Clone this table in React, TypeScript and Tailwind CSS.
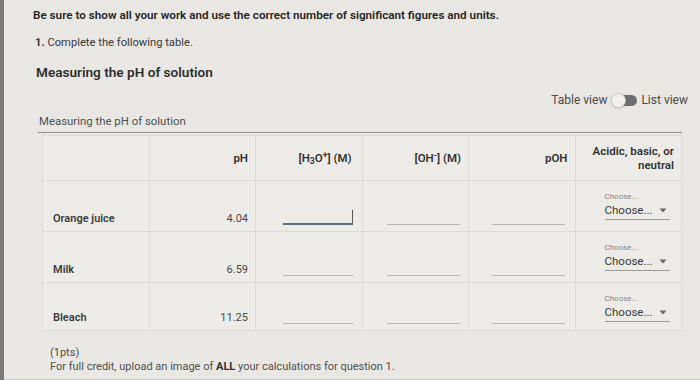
import type { ReactNode } from 'react';

interface Solution {
  name: string;
  ph: string;
  height: string;
}

const solutions: Solution[] = [
  { name: 'Orange juice', ph: '4.04', height: 'h-[51px]' },
  { name: 'Milk', ph: '6.59', height: 'h-[51px]' },
  { name: 'Bleach', ph: '11.25', height: 'h-[48px]' },
];

const cell = 'border-[1.5px] border-[#dddbd6] bg-[#ecebe7] p-0';

const HeaderCell = ({ children }: { children: ReactNode }) => (
  <th className={`${cell} pr-[7px] text-right align-middle text-[11.5px] font-semibold leading-[14px] text-[#333]`}>
    {children}
  </th>
);

// text field with only a bottom line; `focused` shows the caret and the darker line
const LineInput = ({ pl, pr, focused }: { pl: string; pr: string; focused?: boolean }) => (
  <td className={`${cell} ${pl} ${pr} align-bottom pb-[6px]`}>
    <div className="relative h-[15px]">
      {focused && <span className="absolute right-0 top-0 h-[14px] w-px bg-[#555]" />}
      <div className={focused ? 'absolute bottom-0 left-0 right-0 h-[2px] bg-[#5b6f7c]' : 'absolute bottom-0 left-0 right-0 h-px bg-[#b9b7b2]'} />
    </div>
  </td>
);

const ChooseSelect = () => (
  <td className={`${cell} pl-[29px] pr-[11px] align-top pt-[11px]`}>
    <div className="text-[8px] leading-[10px] text-[#858585]">Choose...</div>
    <div className="mt-[1px] flex items-center justify-between border-b border-[#9c9a96] pb-[2px]">
      <span className="text-[11.5px] leading-[14px] text-[#3a3a3a]">Choose...</span>
      <svg width="8" height="5" viewBox="0 0 8 5" className="mr-[3px]">
        <path d="M0.5 0.5 L4 4.5 L7.5 0.5 Z" fill="#666" />
      </svg>
    </div>
  </td>
);

export default function App() {
  return (
    <div className="flex h-[380px] w-[700px] overflow-hidden bg-[#e9e7e3] font-['Roboto',sans-serif] text-[#2b2b2b]">
      <div className="w-[4px] shrink-0 bg-[#7b7b7b]" />
      <div className="flex-1 border-b border-[#cfcdc8]">
        <p className="ml-[29px] mt-[6px] text-[11.7px] font-semibold leading-[18px] text-[#262626]">
          Be sure to show all your work and use the correct number of significant figures and units.
        </p>
        <p className="ml-[31px] mt-[10px] text-[11.2px] leading-[18px] text-[#3a3a3a]">
          <span className="font-bold">1.</span> Complete the following table.
        </p>
        <h2 className="ml-[32px] mt-[10px] text-[13.6px] font-semibold leading-[20px] text-[#2e2e2e]">
          Measuring the pH of solution
        </h2>

        <div className="mr-[12px] mt-[10px] flex items-center justify-end gap-[4px] text-[12px] leading-[16px] text-[#4a4a4a]">
          <span>Table view</span>
          <span className="relative h-[14px] w-[26px]">
            <span className="absolute right-0 top-[2px] h-[11px] w-[19px] rounded-full bg-[#6e6e6e]" />
            <span className="absolute left-0 top-0 h-[15px] w-[15px] rounded-full border border-[#c9c7c3] bg-[#f1f0ec] shadow-sm" />
          </span>
          <span>List view</span>
        </div>

        <div className="ml-[34px] mt-[5px] w-[644px] border-b-[1.5px] border-[#8f8d89] pb-[3px] pl-[1px] text-[11.4px] leading-[16px] text-[#505050]">
          Measuring the pH of solution
        </div>

        <table className="ml-[38px] mt-[2px] w-[640px] table-fixed border-collapse">
          <thead>
            <tr className="h-[45px]">
              <HeaderCell>{''}</HeaderCell>
              <HeaderCell>pH</HeaderCell>
              <HeaderCell>
                <span className="pr-[3px]">
                  [H<sub>3</sub>O<sup>+</sup>] (M)
                </span>
              </HeaderCell>
              <HeaderCell>
                [OH<sup>-</sup>] (M)
              </HeaderCell>
              <HeaderCell>pOH</HeaderCell>
              <HeaderCell>
                Acidic, basic, or
                <br />
                neutral
              </HeaderCell>
            </tr>
          </thead>
          <tbody>
            {solutions.map((s, i) => (
              <tr key={s.name} className={s.height}>
                <td className={`${cell} pl-[10px] align-bottom pb-[5px] text-[11px] font-semibold leading-[14px] text-[#3d3d3d]`}>
                  {s.name}
                </td>
                <td className={`${cell} pr-[7px] align-bottom pb-[5px] text-right text-[11px] leading-[14px] text-[#4a4a4a]`}>
                  {s.ph}
                </td>
                <LineInput pl="pl-[27px]" pr="pr-[9px]" focused={i === 0} />
                <LineInput pl="pl-[24px]" pr="pr-[8px]" />
                <LineInput pl="pl-[23px]" pr="pr-[10px]" />
                <ChooseSelect />
              </tr>
            ))}
          </tbody>
        </table>

        <div className="ml-[46px] mt-[15px] text-[11px] leading-[14px] text-[#505050]">
          <div>(1pts)</div>
          <div>
            For full credit, upload an image of <span className="font-bold text-[#333]">ALL</span> your calculations
            for question 1.
          </div>
        </div>
      </div>
    </div>
  );
}
